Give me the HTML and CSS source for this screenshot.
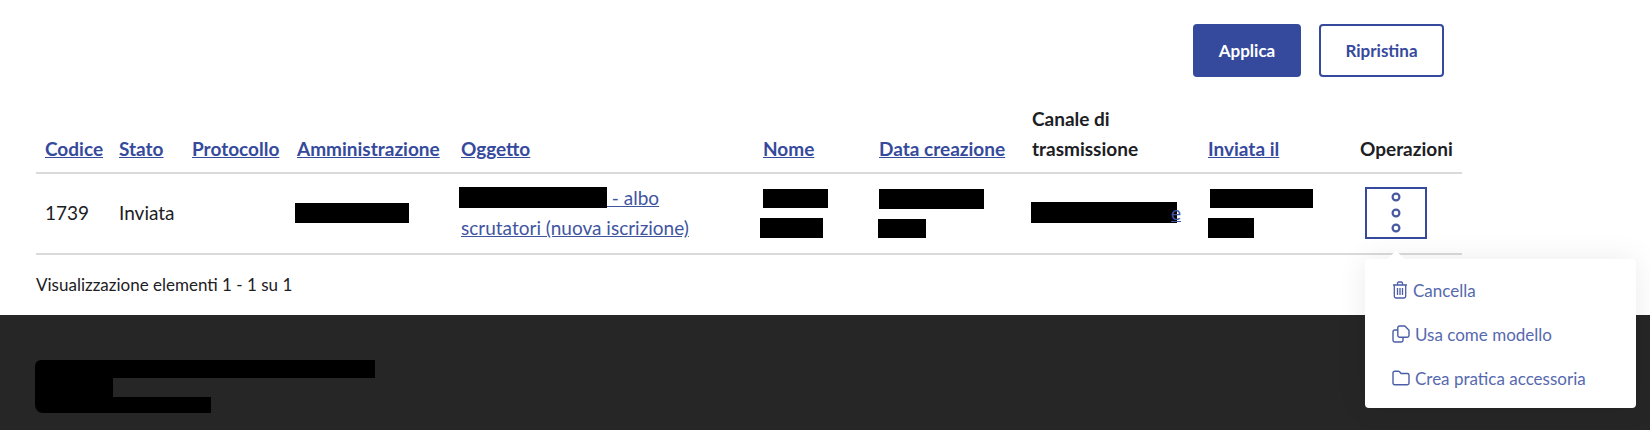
FILE: index.html
```html
<!DOCTYPE html>
<html lang="it">
<head>
<meta charset="utf-8">
<title>Pratiche</title>
<link rel="stylesheet" href="styles.css">
</head>
<body>
<main class="content">
  <div class="actions">
    <button class="btn btn-primary" type="button">Applica</button>
    <button class="btn btn-outline" type="button">Ripristina</button>
  </div>
  <table class="grid">
    <colgroup>
      <col class="c1"><col class="c2"><col class="c3"><col class="c4"><col class="c5">
      <col class="c6"><col class="c7"><col class="c8"><col class="c9"><col class="c10">
    </colgroup>
    <thead>
      <tr>
        <th><a href="#">Codice</a></th>
        <th><a href="#">Stato</a></th>
        <th><a href="#">Protocollo</a></th>
        <th><a href="#">Amministrazione</a></th>
        <th><a href="#">Oggetto</a></th>
        <th><a href="#">Nome</a></th>
        <th><a href="#">Data creazione</a></th>
        <th>Canale di trasmissione</th>
        <th><a href="#">Inviata il</a></th>
        <th>Operazioni</th>
      </tr>
    </thead>
    <tbody>
      <tr>
        <td>1739</td>
        <td>Inviata</td>
        <td></td>
        <td><span class="redact r-amm"></span></td>
        <td class="stack"><a href="#"><span class="redact r-ogg"></span> - albo<br>scrutatori (nuova iscrizione)</a></td>
        <td class="stack"><span class="redact r-nome1"></span><span class="redact r-nome2"></span></td>
        <td class="stack"><span class="redact r-data1"></span><span class="redact r-data2"></span></td>
        <td><span class="redact r-canale"></span><a class="tail" href="#">e</a></td>
        <td class="stack"><span class="redact r-inv1"></span><span class="redact r-inv2"></span></td>
        <td>
          <button class="kebab" type="button" aria-label="Operazioni">
            <svg width="12" height="44" viewBox="0 0 12 44" fill="none" stroke="currentColor" stroke-width="2.2">
              <circle cx="6" cy="6" r="3.4"/><circle cx="6" cy="22" r="3.4"/><circle cx="6" cy="37" r="3.4"/>
            </svg>
          </button>
        </td>
      </tr>
    </tbody>
  </table>
  <p class="count">Visualizzazione elementi 1 - 1 su 1</p>
</main>
<footer class="footer">
  <div class="foot-block">
    <span class="redact r-f1"></span>
    <span class="redact r-f2"></span>
    <span class="redact r-f3"></span>
  </div>
</footer>
<nav class="menu">
  <a class="menu-item" href="#">
    <svg class="ico" width="16" height="18" viewBox="0 0 16 18" fill="none" stroke="currentColor" stroke-width="1.3">
      <path d="M1 4h14M5.500 4V2.200C5.500 1.500 6 1 6.700 1h2.600c.7 0 1.200.5 1.200 1.200V4"/>
      <path d="M2.300 4v11.300C2.300 16.300 3 17 4 17h8c1 0 1.700-.7 1.700-1.700V4"/>
      <path d="M5.500 7v7M8 7v7M10.500 7v7"/>
    </svg>
    <span>Cancella</span>
  </a>
  <a class="menu-item" href="#">
    <svg class="ico" width="18" height="18" viewBox="0 0 18 18" fill="none" stroke="currentColor" stroke-width="1.4">
      <path d="M7.500 1h5.300l4.200 4.200v5.300c0 1-.7 1.700-1.700 1.700H7.500c-1 0-1.700-.7-1.700-1.700V2.700C5.800 1.700 6.500 1 7.500 1z"/>
      <path d="M5.800 5H2.700C1.700 5 1 5.700 1 6.700v8.600C1 16.300 1.700 17 2.700 17h6.600c1 0 1.700-.7 1.700-1.700v-3.100"/>
    </svg>
    <span>Usa come modello</span>
  </a>
  <a class="menu-item" href="#">
    <svg class="ico" width="18" height="16" viewBox="0 0 18 16" fill="none" stroke="currentColor" stroke-width="1.4">
      <path d="M1 3c0-1 .7-1.800 1.700-1.800h3.500c.6 0 1 .2 1.400.6L9 3.500h6.300C16.300 3.500 17 4.200 17 5.200v7.900c0 1-.7 1.700-1.700 1.700H2.700C1.700 14.800 1 14.100 1 13.100V3z"/>
    </svg>
    <span>Crea pratica accessoria</span>
  </a>
</nav>
</body>
</html>
```
FILE: styles.css
```css
* { box-sizing: border-box; }
html, body { margin: 0; height: 430px; overflow: hidden; }
body {
  position: relative;
  display: flex;
  flex-direction: column;
  background: #fff;
  color: #1c2024;
  font-family: "Lato", "Noto Sans", sans-serif;
  font-size: 19px;
}
a { color: #354a9c; }

.content { height: 315px; padding: 24px 0 0 36px; }

.actions { display: flex; justify-content: flex-end; gap: 18px; padding-right: 206px; margin-bottom: 19px; }
.btn {
  height: 53px;
  border-radius: 4px;
  font-family: inherit;
  font-size: 17px;
  font-weight: 700;
  border: 2px solid #354a9c;
}
.btn-primary { width: 108px; background: #354a9c; color: #fff; }
.btn-outline { width: 125px; background: #fff; color: #354a9c; }

.grid { width: 1426px; table-layout: fixed; border-collapse: collapse; }
.c1 { width: 74px; } .c2 { width: 73px; } .c3 { width: 105px; } .c4 { width: 164px; } .c5 { width: 302px; }
.c6 { width: 116px; } .c7 { width: 153px; } .c8 { width: 176px; } .c9 { width: 152px; } .c10 { width: 111px; }

.grid th {
  padding: 8px 9px;
  text-align: left;
  vertical-align: bottom;
  font-weight: 700;
  line-height: 30px;
  border-bottom: 2px solid #d9dadb;
}
.grid td {
  height: 81px;
  padding: 0 9px 1px;
  vertical-align: middle;
  line-height: 30px;
  border-bottom: 2px solid #d9dadb;
}
.grid td a { font-weight: 400; color: #41559f; }

.redact { display: block; background: #000; }
.stack .redact + .redact { margin-top: 10px; }
.r-amm { width: 114px; height: 20px; margin-left: -2px; }
.r-ogg { display: inline-block; width: 148px; height: 21px; margin-left: -2px; vertical-align: -3px; }
.r-nome1 { width: 65px; height: 19px; }
.r-nome2 { width: 63px; height: 20px; margin-left: -3px; }
.r-data1 { width: 105px; height: 20px; }
.r-data2 { width: 48px; height: 19px; margin-left: -1px; }
.r-canale { display: inline-block; width: 146px; height: 21px; margin-left: -1px; vertical-align: -3px; }
.r-inv1 { width: 103px; height: 19px; margin-left: 2px; }
.r-inv2 { width: 46px; height: 20px; }
.tail { margin-left: -6px; }

.kebab {
  display: flex;
  align-items: center;
  justify-content: center;
  width: 62px;
  height: 52px;
  margin: 0 0 1px 5px;
  padding: 0;
  background: #fff;
  color: #47599f;
  border: 2px solid #354a9c;
}

.count { margin: 19px 0 0; font-size: 17px; line-height: 22px; }

.footer { flex: 1; background: #262626; padding: 45px 0 0 35px; }
.foot-block { display: flex; flex-direction: column; align-items: flex-start; }
.r-f1 { width: 340px; height: 18px; border-radius: 6px 0 0 0; }
.r-f2 { width: 78px; height: 19px; }
.r-f3 { width: 176px; height: 16px; border-radius: 0 0 0 8px; }

.menu {
  position: absolute;
  left: 1365px;
  top: 259px;
  width: 271px;
  height: 149px;
  padding: 9px 0 0 27px;
  background: #fff;
  border-radius: 4px;
  box-shadow: 0 0 30px rgba(0, 0, 0, .08);
}
.menu::before {
  content: "";
  position: absolute;
  left: 25px;
  top: -6px;
  width: 12px;
  height: 12px;
  background: #fff;
  transform: rotate(45deg);
}
.menu-item {
  position: relative;
  display: flex;
  align-items: center;
  gap: 5px;
  height: 44px;
  font-size: 17px;
  color: #5669ae;
  text-decoration: none;
}
.ico { flex: none; color: #4a5da6; }
```
